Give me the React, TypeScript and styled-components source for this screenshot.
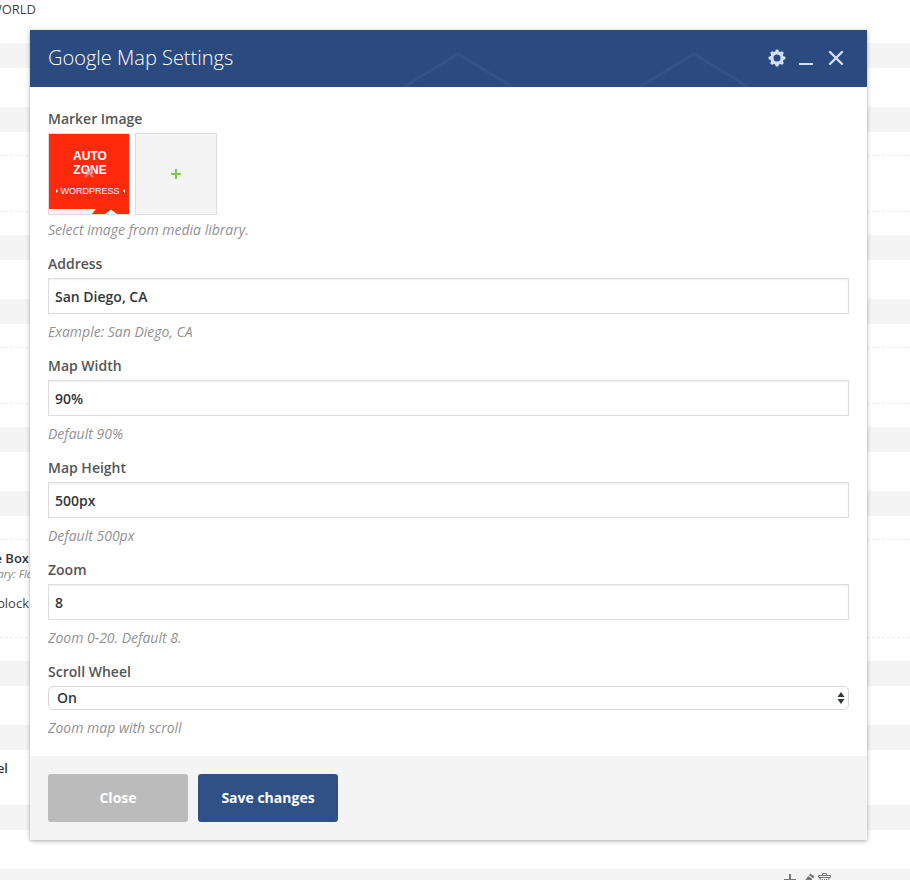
import React, { useState } from "react";
import styled, { createGlobalStyle, css } from "styled-components";

const GlobalStyle = createGlobalStyle`
  *, *::before, *::after { box-sizing: border-box; }
  body {
    margin: 0;
    background: #fff;
    color: #32373c;
    font-family: "Open Sans", "Noto Sans", sans-serif;
    font-size: 14px;
  }
  button, input, select { font: inherit; }
`;

/* Page behind the dialog */

const Page = styled.div`
  position: relative;
  height: 100vh;
  overflow: hidden;
`;

const Bar = styled.div`
  display: flex;
  align-items: flex-start;
  justify-content: flex-end;
  gap: 2px;
  height: 25px;
  padding: 4px 78px 0 0;
  background: #f4f4f4;
  color: #777;
`;

const BarButton = styled.button`
  display: flex;
  padding: 0;
  border: 0;
  background: none;
  color: inherit;
`;

const Block = styled.div<{ $height: number }>`
  height: ${(p) => p.$height}px;
  padding-top: ${(p) => (p.$height > 60 ? 23 : 0)}px;
`;

const Slot = styled.div<{ $height: number }>`
  height: ${(p) => p.$height}px;
  padding-top: 9px;
  border: dashed #ececec;
  border-width: 1px 0;
`;

const Snippet = styled.div<{ $width: number; $kind?: "bold" | "note" | "spaced" | "row" }>`
  display: flex;
  justify-content: flex-end;
  width: ${(p) => p.$width}px;
  overflow: hidden;
  white-space: nowrap;
  font-size: 13px;
  line-height: 18px;
  color: #444;
  ${(p) => (p.$kind === "bold" || p.$kind === "row") && css`font-weight: 600; color: #32373c;`}
  ${(p) => p.$kind === "row" && css`padding-top: 9px;`}
  ${(p) => p.$kind === "note" && css`
    font-size: 11px;
    line-height: 14px;
    font-style: italic;
    color: #888;
  `}
  ${(p) => p.$kind === "spaced" && css`margin-top: 13px;`}
`;

/* Dialog */

const Dialog = styled.section`
  position: absolute;
  top: 30px;
  left: 30px;
  right: 43px;
  background: #fff;
  box-shadow: 0 1px 4px rgba(0, 0, 0, 0.35);
`;

const Header = styled.header`
  position: relative;
  display: flex;
  align-items: center;
  justify-content: space-between;
  height: 57px;
  padding: 0 22px 2px 18px;
  background: #2b4a80;
`;

const Roofs = styled.svg`
  position: absolute;
  right: 115px;
  bottom: 0;
`;

const Title = styled.h1`
  margin: 0;
  font-size: 20px;
  line-height: 28px;
  font-weight: 300;
  color: #fff;
`;

const Tools = styled.div`
  display: flex;
  align-items: center;
  gap: 12px;
`;

const Tool = styled.button`
  display: flex;
  padding: 0;
  border: 0;
  background: none;
  color: #d3e0f8;
  cursor: pointer;
`;

const Body = styled.div`
  display: flex;
  flex-direction: column;
  gap: 10px;
  padding: 20px 18px 16px;
`;

const Field = styled.div`
  display: flex;
  flex-direction: column;
  gap: 2px;
`;

const Label = styled.label`
  font-weight: 600;
  line-height: 24px;
  color: #555;
`;

const Help = styled.p<{ $tight?: boolean }>`
  margin: ${(p) => (p.$tight ? 1 : 4)}px 0 0;
  line-height: 24px;
  font-style: italic;
  color: #929292;
`;

const TextInput = styled.input`
  width: 100%;
  height: 36px;
  padding: 0 6px;
  border: 1px solid #ddd;
  border-radius: 0;
  outline: 0;
  background: #fff;
  box-shadow: inset 0 1px 2px rgba(0, 0, 0, 0.07);
  font-weight: 600;
  color: #32373c;
`;

const SelectBox = styled.div`
  position: relative;
  display: flex;
`;

const Select = styled.select`
  width: 100%;
  height: 24px;
  padding: 0 8px;
  appearance: none;
  border: 1px solid #d8d8d8;
  border-radius: 5px;
  background: #fff;
  font-weight: 600;
  line-height: 20px;
  color: #32373c;
`;

const Arrows = styled.svg`
  position: absolute;
  top: 6px;
  right: 4px;
  pointer-events: none;
`;

const Thumbs = styled.div`
  display: flex;
  gap: 5px;
`;

const Thumb = styled.button`
  display: flex;
  align-items: center;
  justify-content: center;
  width: 82px;
  height: 82px;
  padding: 0;
  border: 1px solid #ddd;
  background: #f4f4f4;
  cursor: pointer;
`;

const Footer = styled.footer`
  display: flex;
  gap: 10px;
  padding: 18px;
  background: #f4f4f4;
`;

const ActionButton = styled.button<{ $primary?: boolean }>`
  width: 140px;
  height: 48px;
  padding: 0 0 2px;
  border: 0;
  border-radius: 3px;
  background: ${(p) => (p.$primary ? "#305186" : "#bbb")};
  color: #fff;
  font-weight: 700;
  cursor: pointer;
`;

function MarkerPicture() {
  return (
    <svg width="80" height="80" viewBox="0 0 80 80" aria-hidden="true">
      <rect width="80" height="80" fill="#ff2a0e" />
      <path d="M0 75H47L43 80H0Z M56 80L62 75.5L68 80Z" fill="#f6f3f2" />
      <g fill="#fff" textAnchor="middle" fontFamily='"Liberation Sans", Arial, sans-serif'>
        <text x="41" y="26" fontSize="12" fontWeight="700">AUTO</text>
        <text x="41" y="40" fontSize="12" fontWeight="700">ZONE</text>
        <text x="41" y="60" fontSize="9">WORDPRESS</text>
      </g>
      <path d="M7 55L9 57L7 59Z M76 55L74 57L76 59Z" fill="#fff" />
      <path d="M36 35L44 43M44 35L36 43" stroke="#ff8a8a" strokeWidth="2.2" opacity="0.85" />
    </svg>
  );
}

function GearIcon() {
  const teeth = [0, 45, 90, 135, 180, 225, 270, 315];
  return (
    <svg width="19" height="18" viewBox="0 0 19 18" aria-hidden="true">
      <circle cx="9" cy="9" r="5.1" fill="none" stroke="currentColor" strokeWidth="3.2" />
      {teeth.map((a) => (
        <path
          key={a}
          d="M7 3L7.7 0.8Q9 0 10.3 0.8L11 3Z"
          fill="currentColor"
          transform={`rotate(${a} 9 9)`}
        />
      ))}
    </svg>
  );
}

type TextFieldProps = { id: string; label: string; initial: string; help: string };

function TextField({ id, label, initial, help }: TextFieldProps) {
  return (
    <Field>
      <Label htmlFor={id}>{label}</Label>
      <TextInput id={id} type="text" defaultValue={initial} aria-describedby={`${id}-help`} />
      <Help id={`${id}-help`}>{help}</Help>
    </Field>
  );
}

function Backdrop() {
  return (
    <>
      <Block $height={43}>
        <Snippet $width={36}>WORLD</Snippet>
      </Block>
      <Bar />
      <Block $height={39} />
      <Bar />
      <Block $height={103}><Slot $height={57} /></Block>
      <Bar />
      <Block $height={39} />
      <Bar />
      <Block $height={103}><Slot $height={57} /></Block>
      <Bar />
      <Block $height={39} />
      <Bar />
      <Block $height={145}>
        <Slot $height={99}>
          <Snippet $width={29} $kind="bold">e Box</Snippet>
          <Snippet $width={33} $kind="note">ary: Fla</Snippet>
          <Snippet $width={29} $kind="spaced">block</Snippet>
        </Slot>
      </Block>
      <Bar />
      <Block $height={39} />
      <Bar />
      <Block $height={55}>
        <Snippet $width={8} $kind="row">el</Snippet>
      </Block>
      <Bar />
      <Block $height={39} />
      <Bar>
        <BarButton aria-label="Add">
          <svg width="17" height="17" viewBox="0 0 17 17" stroke="currentColor" strokeWidth="2">
            <path d="M6 1V13M0 7H12" />
          </svg>
        </BarButton>
        <BarButton aria-label="Edit">
          <svg width="13" height="15" viewBox="0 0 13 15" fill="currentColor">
            <path d="M7.3 0.5L11.5 3.4L10.2 5.2L5.9 2.3Z M5.2 3.1L9.5 6L4 13L0 14.2L0.2 10Z" />
          </svg>
        </BarButton>
        <BarButton aria-label="Delete">
          <svg width="14" height="15" viewBox="0 0 14 15" fill="none" stroke="currentColor">
            <path d="M0.5 4.5V2.5H12.5V4.5Z M4.5 2.5V0.5H8.5V2.5 M2 4.5L3 14.5H10L11 4.5 M4.5 6V13 M6.5 6V13 M8.5 6V13" />
          </svg>
        </BarButton>
      </Bar>
    </>
  );
}

export default function App() {
  const [scroll, setScroll] = useState("On");
  return (
    <Page>
      <GlobalStyle />
      <Backdrop />
      <Dialog role="dialog" aria-labelledby="dialog-title">
        <Header>
          <Roofs width="350" height="36" viewBox="0 0 350 36" aria-hidden="true">
            <path
              d="M0 37L56 3L112 37M236 37L292 3L348 37"
              fill="none"
              stroke="#32538a"
              strokeWidth="3"
            />
          </Roofs>
          <Title id="dialog-title">Google Map Settings</Title>
          <Tools>
            <Tool aria-label="Settings"><GearIcon /></Tool>
            <Tool aria-label="Minimize">
              <svg width="16" height="18" viewBox="0 0 16 18" aria-hidden="true">
                <path d="M0 15H14" stroke="currentColor" strokeWidth="2" />
              </svg>
            </Tool>
            <Tool aria-label="Close dialog">
              <svg width="18" height="18" viewBox="0 0 18 18" aria-hidden="true">
                <path
                  d="M3 3L15 15M15 3L3 15"
                  stroke="currentColor"
                  strokeWidth="2.4"
                  strokeLinecap="round"
                />
              </svg>
            </Tool>
          </Tools>
        </Header>
        <Body>
          <Field role="group" aria-labelledby="marker-label">
            <Label as="span" id="marker-label">Marker Image</Label>
            <Thumbs>
              <Thumb type="button" aria-label="Remove image"><MarkerPicture /></Thumb>
              <Thumb type="button" aria-label="Add image">
                <svg width="12" height="12" viewBox="0 0 12 12" aria-hidden="true">
                  <path d="M6 1V11M1 6H11" stroke="#7dc855" strokeWidth="2" />
                </svg>
              </Thumb>
            </Thumbs>
            <Help $tight>Select image from media library.</Help>
          </Field>
          <TextField id="address" label="Address" initial="San Diego, CA" help="Example: San Diego, CA" />
          <TextField id="map-width" label="Map Width" initial="90%" help="Default 90%" />
          <TextField id="map-height" label="Map Height" initial="500px" help="Default 500px" />
          <TextField id="zoom" label="Zoom" initial="8" help="Zoom 0-20. Default 8." />
          <Field>
            <Label htmlFor="scroll-wheel">Scroll Wheel</Label>
            <SelectBox>
              <Select id="scroll-wheel" value={scroll} onChange={(e) => setScroll(e.target.value)}>
                <option>On</option>
                <option>Off</option>
              </Select>
              <Arrows width="8" height="12" viewBox="0 0 8 12" aria-hidden="true">
                <path d="M0.5 5L4 0L7.5 5Z M0.5 7L4 12L7.5 7Z" fill="#32373c" />
              </Arrows>
            </SelectBox>
            <Help>Zoom map with scroll</Help>
          </Field>
        </Body>
        <Footer>
          <ActionButton type="button">Close</ActionButton>
          <ActionButton type="button" $primary>Save changes</ActionButton>
        </Footer>
      </Dialog>
    </Page>
  );
}
